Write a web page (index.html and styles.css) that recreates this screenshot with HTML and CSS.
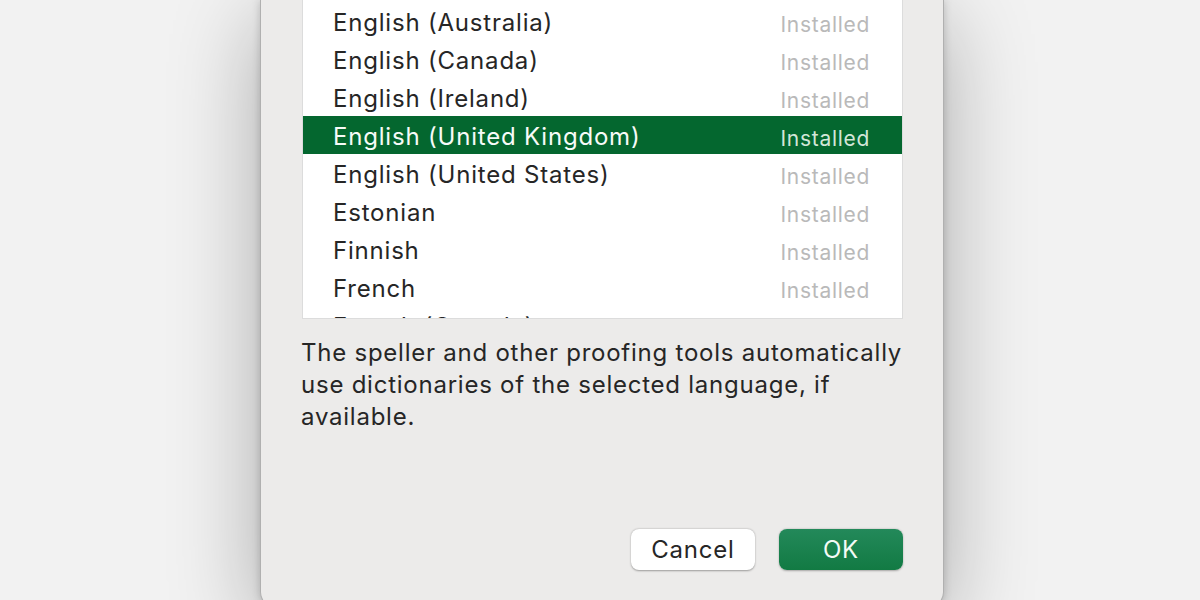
FILE: index.html
```
<!DOCTYPE html>
<html>
<head>
<meta charset="utf-8">
<link rel="stylesheet" href="styles.css">
</head>
<body>
<div class="dialog">
  <div class="list">
    <div class="row"><span class="lang">English (Australia)</span><span class="status">Installed</span></div>
    <div class="row"><span class="lang">English (Canada)</span><span class="status">Installed</span></div>
    <div class="row"><span class="lang">English (Ireland)</span><span class="status">Installed</span></div>
    <div class="row selected"><span class="lang">English (United Kingdom)</span><span class="status">Installed</span></div>
    <div class="row"><span class="lang">English (United States)</span><span class="status">Installed</span></div>
    <div class="row"><span class="lang">Estonian</span><span class="status">Installed</span></div>
    <div class="row"><span class="lang">Finnish</span><span class="status">Installed</span></div>
    <div class="row"><span class="lang">French</span><span class="status">Installed</span></div>
    <div class="row"><span class="lang">French (Canada)</span><span class="status">Installed</span></div>
  </div>
  <p class="desc">The speller and other proofing tools automatically use dictionaries of the selected language, if available.</p>
  <div class="buttons">
    <button class="btn cancel">Cancel</button>
    <button class="btn ok">OK</button>
  </div>
</div>
</body>
</html>
```
FILE: styles.css
```
html, body {
  margin: 0;
  padding: 0;
  height: 600px;
  overflow: hidden;
  background: #f2f2f2;
  font-family: Inter, "Open Sans", "Liberation Sans", sans-serif;
}
.dialog {
  box-sizing: border-box;
  width: 684px;
  height: 608px;
  margin-left: 260px;
  background: #ecebea;
  border: 1px solid #b0b0b0;
  border-top: none;
  border-radius: 0 0 16px 16px;
  box-shadow: 0 20px 90px rgba(0, 0, 0, 0.3), 0 0 8px rgba(0, 0, 0, 0.18);
  padding: 0 40px 0 40px;
  display: flex;
  flex-direction: column;
}
.list {
  height: 319px;
  overflow: hidden;
  background: #fff;
  border: 1px solid #dcdcdc;
  border-top: none;
  padding-top: 2px;
  box-sizing: border-box;
  width: 601px;
  margin-left: 1px;
}
.row {
  height: 38px;
  display: flex;
  align-items: center;
  justify-content: space-between;
  padding: 3px 32px 0 30px;
  box-sizing: border-box;
  font-size: 24px;
  letter-spacing: 0.8px;
  color: #262626;
}
.row .status {
  font-size: 21px;
  color: #b9b9b9;
  letter-spacing: 0.7px;
  margin-top: 3px;
}
.row.selected {
  background: #04672f;
  color: #f7fbf8;
}
.row.selected .status {
  color: #d3e6d8;
}
.desc {
  margin: 18px 0 0 0;
  width: 620px;
  font-size: 24px;
  line-height: 32px;
  letter-spacing: 0.76px;
  color: #262626;
}
.buttons {
  display: flex;
  justify-content: flex-end;
  gap: 24px;
  margin-top: auto;
  margin-bottom: 37px;
}
.btn {
  width: 124px;
  height: 41px;
  border-radius: 8px;
  font-family: Inter, "Open Sans", "Liberation Sans", sans-serif;
  font-size: 24px;
  letter-spacing: 0.8px;
  border: none;
  padding: 0;
}
.cancel {
  background: #fff;
  color: #262626;
  box-shadow: 0 0.5px 2px rgba(0, 0, 0, 0.35);
}
.ok {
  background: linear-gradient(#23895a, #127a43);
  color: #f4fbf6;
  box-shadow: 0 0.5px 2px rgba(0, 0, 0, 0.3);
}
```
